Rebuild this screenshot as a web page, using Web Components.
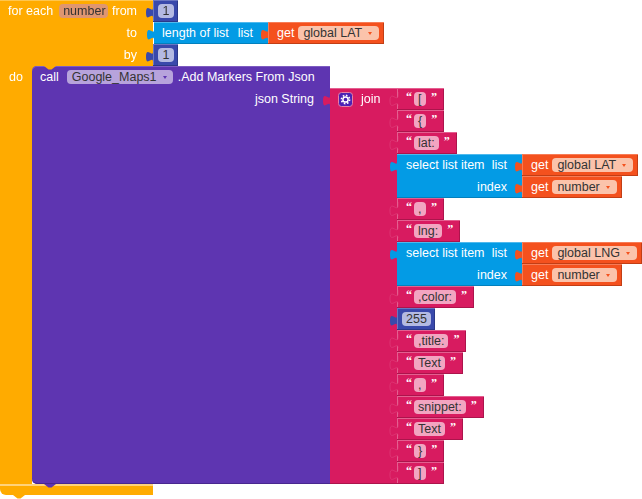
<!DOCTYPE html>
<html>
<head>
<meta charset="utf-8">
<title>Blocks</title>
<style>
  html { overflow: hidden; }
  html, body { margin: 0; padding: 0; background: #fff; }
  body { min-height: 499px; font: 12.5px "Liberation Sans", Arial, sans-serif; color: #fff; }
  body > x-block { filter: blur(0.3px); }
</style>
</head>
<body>

<x-block color="control" bump="13">
  <x-row w="153" pl="8" pr="16" left>
    <span style="margin-right:6px">for each</span><x-field tint="#df9670" style="width:51px;margin-right:4px">number</x-field><span>from</span>
    <x-num slot="value">1</x-num>
  </x-row>
  <x-row w="153" pr="16">
    to
    <x-block slot="value" color="list" tab style="margin-left:1px">
      <x-row w="114" pl="8" pr="15" spread>
        <span>length of list</span><span>list</span>
        <x-get slot="value">global LAT</x-get>
      </x-row>
    </x-block>
  </x-row>
  <x-row w="153" pr="16">
    by
    <x-num slot="value">1</x-num>
  </x-row>
  <x-row w="32" pl="9" left>
    do
    <x-block slot="value" color="proc" notch="12" bump="12" round>
      <x-row w="298" pl="8" left>
        <span style="margin-right:8px">call</span><x-field tint="#b7a3dc" caret="#5e35b1" style="width:106px;margin-right:5px">Google_Maps1</x-field><span>.Add Markers From Json</span>
      </x-row>
      <x-row w="298" pr="16">
        json String
        <x-block slot="value" color="text" tab>
          <x-row w="67" pl="8" left>
            <x-gear style="margin-right:8px"></x-gear>join
            <x-str slot="value">[</x-str>
            <x-str slot="value">{</x-str>
            <x-str slot="value">lat:</x-str>
            <x-select slot="value" first="global LAT"></x-select>
            <x-str slot="value">,</x-str>
            <x-str slot="value">lng:</x-str>
            <x-select slot="value" first="global LNG"></x-select>
            <x-str slot="value">,color:</x-str>
            <x-num slot="value">255</x-num>
            <x-str slot="value">,title:</x-str>
            <x-str slot="value">Text</x-str>
            <x-str slot="value">,</x-str>
            <x-str slot="value">snippet:</x-str>
            <x-str slot="value">Text</x-str>
            <x-str slot="value">}</x-str>
            <x-str slot="value">]</x-str>
          </x-row>
        </x-block>
      </x-row>
    </x-block>
  </x-row>
  <x-row w="153" h="11" bar></x-row>
</x-block>

<script>
const PALETTE = {
  control: ['#ffab00', '#ffc64d', '#e89c00'],
  list: ['#039be5', '#4fb9ed', '#0280bd'],
  get: ['#f4511e', '#f77c56', '#c23e15'],
  proc: ['#5e35b1', '#7d5cc1', '#48278f'],
  text: ['#d81b60', '#e45f90', '#ac144c'],
  math: ['#3949ab', '#6a76c2', '#2b3888']
};

const TAB_PATH = 'M8 0v5c0 10-8-8-8 7.5s8-2.5 8 7.5';
const BUMP_PATH = 'M0 0l4.5 3.5h3L12 0z';

class XBlock extends HTMLElement {
  constructor() {
    super();
    this.attachShadow({ mode: 'open' });
    this.shadowRoot.innerHTML = `
    <style>
      :host {
        display: flex;
        flex-direction: column;
        align-items: flex-start;
        position: relative;
        width: fit-content;
        --top: transparent;
        --bottom: transparent;
        --radius: 0;
      }
      :host([round]) {
        background: linear-gradient(#ffab00, #ffab00) 0 0 / 6px 6px no-repeat;
      }
      :host([round]) ::slotted(x-row:first-child) { --radius: 5px 0 0 0; }
      :host([round]) ::slotted(x-row:last-child) { --radius: 0 0 0 5px; }
      ::slotted(x-row:first-child) { --top: var(--hi); }
      ::slotted(x-row:last-child) { --bottom: var(--lo); }
      svg { position: absolute; overflow: visible; }
      .tab { left: -7px; top: 4px; width: 7px; height: 14px; }
      .tab.soft { width: 8px; }
      .bump { top: 100%; width: 12px; height: 4px; margin-top: -0.5px; }
      .notch { top: 0; width: 12px; height: 4px; }
    </style>
    <slot></slot>`;
  }

  connectedCallback() {
    const [fill, hi, lo] = PALETTE[this.getAttribute('color')];
    this.style.setProperty('--fill', fill);
    this.style.setProperty('--hi', hi);
    this.style.setProperty('--lo', lo);
    const root = this.shadowRoot;
    if (this.hasAttribute('tab')) {
      const soft = this.getAttribute('tab') === 'soft';
      root.innerHTML += `<svg class="tab ${soft ? 'soft' : ''}" viewBox="0 0 8 20" preserveAspectRatio="none"><path d="${TAB_PATH}" fill="${fill}" stroke="${soft ? hi : 'none'}" stroke-opacity=".45" stroke-width="1"/></svg>`;
    }
    if (this.hasAttribute('bump')) {
      root.innerHTML += `<svg class="bump" style="left:${this.getAttribute('bump')}px" viewBox="0 0 12 4"><path d="${BUMP_PATH}" fill="${fill}"/></svg>`;
    }
    if (this.hasAttribute('notch')) {
      root.innerHTML += `<svg class="notch" style="left:${this.getAttribute('notch')}px" viewBox="0 0 12 4"><path d="${BUMP_PATH}" fill="#ffab00"/></svg>`;
    }
  }
}

class XRow extends HTMLElement {
  constructor() {
    super();
    this.attachShadow({ mode: 'open' });
    this.shadowRoot.innerHTML = `
    <style>
      :host { display: flex; align-items: stretch; }
      .label {
        min-height: 22px;
        box-sizing: border-box;
        background: var(--fill);
        border-radius: var(--radius, 0);
        box-shadow: inset 0 1px var(--top, transparent), inset 0 -1px var(--bottom, transparent);
      }
      :host([edged]) .label {
        box-shadow: inset 0 1px var(--hi), inset 0 -1px var(--lo), inset 1px 0 var(--hi), inset -1px 0 var(--lo);
      }
      .line {
        display: flex;
        align-items: center;
        justify-content: flex-end;
        height: 22px;
        white-space: nowrap;
      }
      :host([left]) .line { justify-content: flex-start; }
      :host([spread]) .line { justify-content: space-between; }
      slot[name="value"] { display: flex; flex-direction: column; align-items: flex-start; }
      :host([bar]) .label { min-height: 0; border-radius: 0 0 0 6px; box-shadow: inset 0 2px #ffd27a; }
    </style>
    <div class="label"><div class="line"><slot></slot></div></div>
    <slot name="value"></slot>`;
  }

  connectedCallback() {
    const label = this.shadowRoot.querySelector('.label');
    const line = this.shadowRoot.querySelector('.line');
    if (this.hasAttribute('w')) label.style.width = this.getAttribute('w') + 'px';
    if (this.hasAttribute('h')) {
      label.style.height = this.getAttribute('h') + 'px';
      line.style.height = this.getAttribute('h') + 'px';
    }
    label.style.paddingLeft = (this.getAttribute('pl') || 0) + 'px';
    label.style.paddingRight = (this.getAttribute('pr') || 0) + 'px';
  }
}

class XField extends HTMLElement {
  constructor() {
    super();
    this.attachShadow({ mode: 'open' });
    this.shadowRoot.innerHTML = `
    <style>
      :host {
        display: inline-flex;
        align-items: center;
        justify-content: space-between;
        box-sizing: border-box;
        height: 14px;
        min-width: 12px;
        padding: 0 4px;
        border-radius: 4px;
        background: var(--tint);
        color: #333;
        white-space: pre;
      }
      i {
        display: none;
        margin: 1px 2px 0 6px;
        border-left: 2.5px solid transparent;
        border-right: 2.5px solid transparent;
        border-top: 3.5px solid var(--caret);
      }
      :host([caret]) { padding: 0 5px; }
      :host([caret]) i { display: block; }
    </style>
    <slot></slot><i></i>`;
  }

  connectedCallback() {
    this.style.setProperty('--tint', this.getAttribute('tint'));
    if (this.hasAttribute('caret')) this.style.setProperty('--caret', this.getAttribute('caret'));
  }
}

class XGet extends HTMLElement {
  constructor() {
    super();
    this.attachShadow({ mode: 'open' });
    this.shadowRoot.innerHTML = `
    <style>
      :host { display: block; width: fit-content; }
      x-field { margin-left: 4px; }
    </style>
    <x-block color="get" tab>
      <x-row pl="9" pr="5" left edged>get<x-field tint="#fbc3ab" caret="#f4511e"><slot></slot></x-field></x-row>
    </x-block>`;
  }
}

class XNum extends HTMLElement {
  constructor() {
    super();
    this.attachShadow({ mode: 'open' });
    this.shadowRoot.innerHTML = `
    <style>
      :host { display: block; width: fit-content; }
      x-field { min-width: 16px; justify-content: center; }
    </style>
    <x-block color="math" tab>
      <x-row pl="5" pr="4" left edged><x-field tint="#b4bae2"><slot></slot></x-field></x-row>
    </x-block>`;
  }
}

class XStr extends HTMLElement {
  constructor() {
    super();
    this.attachShadow({ mode: 'open' });
    this.shadowRoot.innerHTML = `
    <style>
      :host { display: block; width: fit-content; }
      b {
        align-self: flex-start;
        width: 5px;
        font: bold 12px/12px "Liberation Serif", serif;
        margin-top: 3px;
        color: #fff;
      }
      .open { margin-right: 3px; }
      .close { margin-left: 5px; }
    </style>
    <x-block color="text" tab="soft">
      <x-row pl="9" pr="8" left edged>
        <b class="open">“</b><x-field tint="#f2a5c1"><slot></slot></x-field><b class="close">”</b>
      </x-row>
    </x-block>`;
  }
}

class XSelect extends HTMLElement {
  constructor() {
    super();
    this.attachShadow({ mode: 'open' });
    this.shadowRoot.innerHTML = `
    <style>:host { display: block; width: fit-content; }</style>
    <x-block color="list" tab>
      <x-row w="125" pl="9" pr="15" spread>
        <span>select list item</span><span>list</span>
        <x-get slot="value"></x-get>
      </x-row>
      <x-row w="125" pr="15">
        index
        <x-get slot="value">number</x-get>
      </x-row>
    </x-block>`;
  }

  connectedCallback() {
    this.shadowRoot.querySelector('x-get').textContent = this.getAttribute('first');
  }
}

class XGear extends HTMLElement {
  constructor() {
    super();
    this.attachShadow({ mode: 'open' });
    this.shadowRoot.innerHTML = `
    <style>:host { display: block; width: 15px; height: 15px; } svg { display: block; }</style>
    <svg width="15" height="15" viewBox="0 0 15 15">
      <rect x=".5" y=".5" width="14" height="14" rx="3" fill="#4b22b4" stroke="#e77fa6"/>
      <circle cx="7.5" cy="7.5" r="4.1" fill="none" stroke="#fff" stroke-width="1.6" stroke-dasharray="1.6 1.6"/>
      <circle cx="7.5" cy="7.5" r="2.6" fill="none" stroke="#fff" stroke-width="1.5"/>
    </svg>`;
  }
}

customElements.define('x-block', XBlock);
customElements.define('x-row', XRow);
customElements.define('x-field', XField);
customElements.define('x-get', XGet);
customElements.define('x-num', XNum);
customElements.define('x-str', XStr);
customElements.define('x-select', XSelect);
customElements.define('x-gear', XGear);
</script>
</body>
</html>
